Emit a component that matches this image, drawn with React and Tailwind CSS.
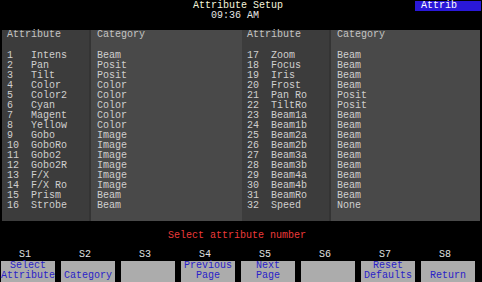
import React from "react";

const left = [
  ["1", "Intens", "Beam"], ["2", "Pan", "Posit"], ["3", "Tilt", "Posit"], ["4", "Color", "Color"],
  ["5", "Color2", "Color"], ["6", "Cyan", "Color"], ["7", "Magent", "Color"], ["8", "Yellow", "Color"],
  ["9", "Gobo", "Image"], ["10", "GoboRo", "Image"], ["11", "Gobo2", "Image"], ["12", "Gobo2R", "Image"],
  ["13", "F/X", "Image"], ["14", "F/X Ro", "Image"], ["15", "Prism", "Beam"], ["16", "Strobe", "Beam"],
];
const right = [
  ["17", "Zoom", "Beam"], ["18", "Focus", "Beam"], ["19", "Iris", "Beam"], ["20", "Frost", "Beam"],
  ["21", "Pan Ro", "Posit"], ["22", "TiltRo", "Posit"], ["23", "Beam1a", "Beam"], ["24", "Beam1b", "Beam"],
  ["25", "Beam2a", "Beam"], ["26", "Beam2b", "Beam"], ["27", "Beam3a", "Beam"], ["28", "Beam3b", "Beam"],
  ["29", "Beam4a", "Beam"], ["30", "Beam4b", "Beam"], ["31", "BeamRo", "Beam"], ["32", "Speed", "None"],
];
const keys = [
  ["S1", "Select", "Attribute"], ["S2", "", "Category"], ["S3", "", ""], ["S4", "Previous", "Page"],
  ["S5", "Next", "Page"], ["S6", "", ""], ["S7", "Reset", "Defaults"], ["S8", "", "Return"],
];

function Half({ rows, attrW, catW, attrPl }) {
  return (
    <div className="flex">
      <div className={`${attrW} ${attrPl} bg-[#3c3c3c] pt-0 pb-[10px] border-r-2 border-[#343434]`}>
        <div className="h-[10px] leading-[10px] text-[#c4c4c4]">Attribute</div>
        <div className="h-[11px]" />
        {rows.map((r) => (
          <div key={r[0]} className="flex h-[10px] leading-[10px] text-[#cfcfcf]">
            <span className="w-[24px]">{r[0]}</span>
            <span>{r[1]}</span>
          </div>
        ))}
      </div>
      <div className={`${catW} pl-[6px] bg-[#494949] pb-[10px]`}>
        <div className="h-[10px] leading-[10px] text-[#c4c4c4]">Category</div>
        <div className="h-[11px]" />
        {rows.map((r) => (
          <div key={r[0]} className="h-[10px] leading-[10px] text-[#cfcfcf]">{r[2]}</div>
        ))}
      </div>
    </div>
  );
}

export default function App() {
  return (
    <div
      className="w-[482px] h-[282px] bg-black overflow-hidden text-[10px] tracking-[0px]"
      style={{ fontFamily: '"Liberation Mono", "DejaVu Sans Mono", monospace' }}
    >
      <div className="relative h-[30px] pt-[1px] flex flex-col items-center">
        <div className="h-[10px] leading-[10px] text-[#f4f4dc] pl-[-0px] ml-[-6px]">Attribute Setup</div>
        <div className="h-[10px] leading-[10px] text-[#e4e4e4] ml-[-12px]">09:36 AM</div>
        <div className="absolute left-[415px] top-[1px] w-[66px] h-[10px] leading-[10px] bg-[#2a18d8] text-white pl-[6px]">
          Attrib
        </div>
      </div>
      <div className="ml-[2px] w-[478px] flex">
        <Half rows={left} attrW="w-[89px]" catW="w-[151px]" attrPl="pl-[5px]" />
        <Half rows={right} attrW="w-[89px]" catW="w-[149px]" attrPl="pl-[5px]" />
      </div>
      <div className="h-[10px] mt-[10px] leading-[10px] text-center text-[#ec3a3a] ml-[-8px]">
        Select attribute number
      </div>
      <div className="flex gap-[6px] ml-[1px] mt-[9px]">
        {keys.map((k) => (
          <div key={k[0]} className="w-[54px] flex flex-col">
            <div className="h-[10px] leading-[10px] text-center text-[#e0e0e0] pr-[6px]">{k[0]}</div>
            <div className="mt-[1px] h-[21px] bg-[#acacac] text-[#2a22c8] text-center">
              <div className="h-[10px] leading-[10px]">{k[1]}</div>
              <div className="h-[10px] leading-[10px]">{k[2]}</div>
            </div>
          </div>
        ))}
      </div>
    </div>
  );
}
